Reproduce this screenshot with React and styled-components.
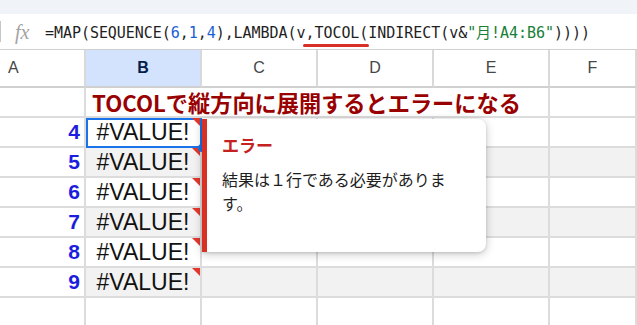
import React from "react";
import styled, { createGlobalStyle } from "styled-components";

const GlobalStyle = createGlobalStyle`
  html, body { margin: 0; padding: 0; background: #fff; overflow: hidden; }
  body { font-family: "Liberation Sans", Arial, sans-serif; }
`;

const Page = styled.div`
  position: relative;
  width: 637px;
  height: 325px;
  overflow: hidden;
  background: #fff;
`;

const TopStrip = styled.div`
  height: 14px;
  background: #f0f3f8;
`;

const FormulaBar = styled.div`
  height: 36px;
  box-sizing: border-box;
  display: flex;
  align-items: center;
  border-bottom: 1px solid #d0d0d0;
`;

const BarDivider = styled.div`
  width: 1px;
  height: 21px;
  background: #c4c7c5;
`;

const Fx = styled.span`
  width: 30px;
  margin-left: 14px;
  font-family: "Liberation Serif", serif;
  font-style: italic;
  font-size: 20px;
  color: #a3a3a3;
  line-height: 1;
`;

const FormulaText = styled.div`
  font-family: "DejaVu Sans Mono", "Noto Sans CJK JP", monospace;
  font-size: 15px;
  color: #1f1f1f;
  white-space: nowrap;
  letter-spacing: -0.05px;
`;

const Num = styled.span`
  color: #1a5fd6;
`;

const Str = styled.span`
  color: #188038;
`;

const Flagged = styled.span`
  position: relative;
  &::after {
    content: "";
    position: absolute;
    left: -2px;
    right: -1px;
    bottom: -5px;
    height: 3px;
    border-radius: 2px;
    background: #d93025;
  }
`;

const Grid = styled.div`
  display: grid;
  grid-template-columns: 86px 116px 116px 116px 116px 1fr;
  grid-template-rows: 38px repeat(8, 30px);
`;

const HeaderCell = styled.div`
  box-sizing: border-box;
  display: flex;
  align-items: center;
  justify-content: ${(p) => (p.$left ? "flex-start" : "center")};
  padding-left: ${(p) => (p.$left ? "8px" : "0")};
  border-right: 2px solid #d9d9d9;
  border-bottom: 2px solid #d0d0d0;
  background: ${(p) => (p.$active ? "#d3e3fd" : "#fff")};
  color: ${(p) => (p.$active ? "#041e49" : "#444746")};
  font-weight: ${(p) => (p.$active ? 700 : 400)};
  font-size: 16px;
`;

const Cell = styled.div`
  position: relative;
  box-sizing: border-box;
  display: flex;
  align-items: center;
  border-right: 2px solid #dcdcdc;
  border-bottom: 2px solid #dcdcdc;
  background: ${(p) => (p.$shaded ? "#f2f2f2" : "#fff")};
  white-space: nowrap;
  min-width: 0;
`;

const RowNum = styled(Cell)`
  justify-content: flex-end;
  padding-right: 4px;
  color: #1d1de0;
  font-weight: 700;
  font-size: 21px;
`;

const TitleCell = styled(Cell)`
  grid-column: span 4;
  padding-left: 6px;
  font-family: "Noto Sans CJK JP", sans-serif;
  font-weight: 700;
  font-size: 22.2px;
  color: #990000;
  overflow: visible;
`;

const ErrorCell = styled(Cell)`
  justify-content: center;
  font-size: 23px;
  color: #111;
  z-index: ${(p) => (p.$selected ? 2 : 0)};
  outline: ${(p) => (p.$selected ? "2px solid #1a73e8" : "none")};
  outline-offset: -2px;
  &::after {
    content: "";
    position: absolute;
    top: 0;
    right: 0;
    width: 0;
    height: 0;
    border-top: 8px solid #e2382c;
    border-left: 8px solid transparent;
  }
`;

const Handle = styled.span`
  position: absolute;
  right: -6px;
  bottom: -6px;
  width: 8px;
  height: 8px;
  border-radius: 50%;
  background: #1a73e8;
`;

const Popup = styled.div`
  position: absolute;
  left: 202px;
  top: 119px;
  width: 284px;
  height: 133px;
  box-sizing: border-box;
  padding: 14px 20px 0 15px;
  background: #fff;
  border-left: 5px solid #d93025;
  border-radius: 0 8px 8px 0;
  box-shadow: 0 2px 10px rgba(0, 0, 0, 0.22), 0 1px 3px rgba(0, 0, 0, 0.12);
  font-family: "Noto Sans CJK JP", sans-serif;
  z-index: 5;
`;

const PopupTitle = styled.div`
  font-size: 17px;
  font-weight: 700;
  line-height: 24px;
  color: #c5221f;
`;

const PopupBody = styled.div`
  margin-top: 10px;
  font-size: 16px;
  line-height: 24px;
  color: #1f1f1f;
  line-break: strict;
`;

const columns = ["A", "B", "C", "D", "E", "F"];
const rows = [4, 5, 6, 7, 8, 9];

export default function App() {
  return (
    <Page>
      <GlobalStyle />
      <TopStrip />
      <FormulaBar>
        <BarDivider />
        <Fx>fx</Fx>
        <FormulaText>
          =MAP(SEQUENCE(<Num>6</Num>,<Num>1</Num>,<Num>4</Num>),LAMBDA(v
          <Flagged>,TOCOL(</Flagged>
          INDIRECT(v&amp;<Str>"月!A4:B6"</Str>))))
        </FormulaText>
      </FormulaBar>
      <Grid>
        {columns.map((c, i) => (
          <HeaderCell key={c} $active={c === "B"} $left={i === 0}>
            {c}
          </HeaderCell>
        ))}
        <Cell />
        <TitleCell>TOCOLで縦方向に展開するとエラーになる</TitleCell>
        <Cell />
        {rows.map((r, idx) => {
          const shaded = idx % 2 === 1;
          return (
            <React.Fragment key={r}>
              <RowNum>{r}</RowNum>
              <ErrorCell $shaded={shaded} $selected={idx === 0}>
                #VALUE!
                {idx === 0 && <Handle />}
              </ErrorCell>
              <Cell $shaded={shaded} />
              <Cell $shaded={shaded} />
              <Cell $shaded={shaded} />
              <Cell $shaded={shaded} />
            </React.Fragment>
          );
        })}
        {columns.map((c) => (
          <Cell key={"blank" + c} />
        ))}
      </Grid>
      <Popup>
        <PopupTitle>エラー</PopupTitle>
        <PopupBody>結果は１行である必要があります。</PopupBody>
      </Popup>
    </Page>
  );
}
